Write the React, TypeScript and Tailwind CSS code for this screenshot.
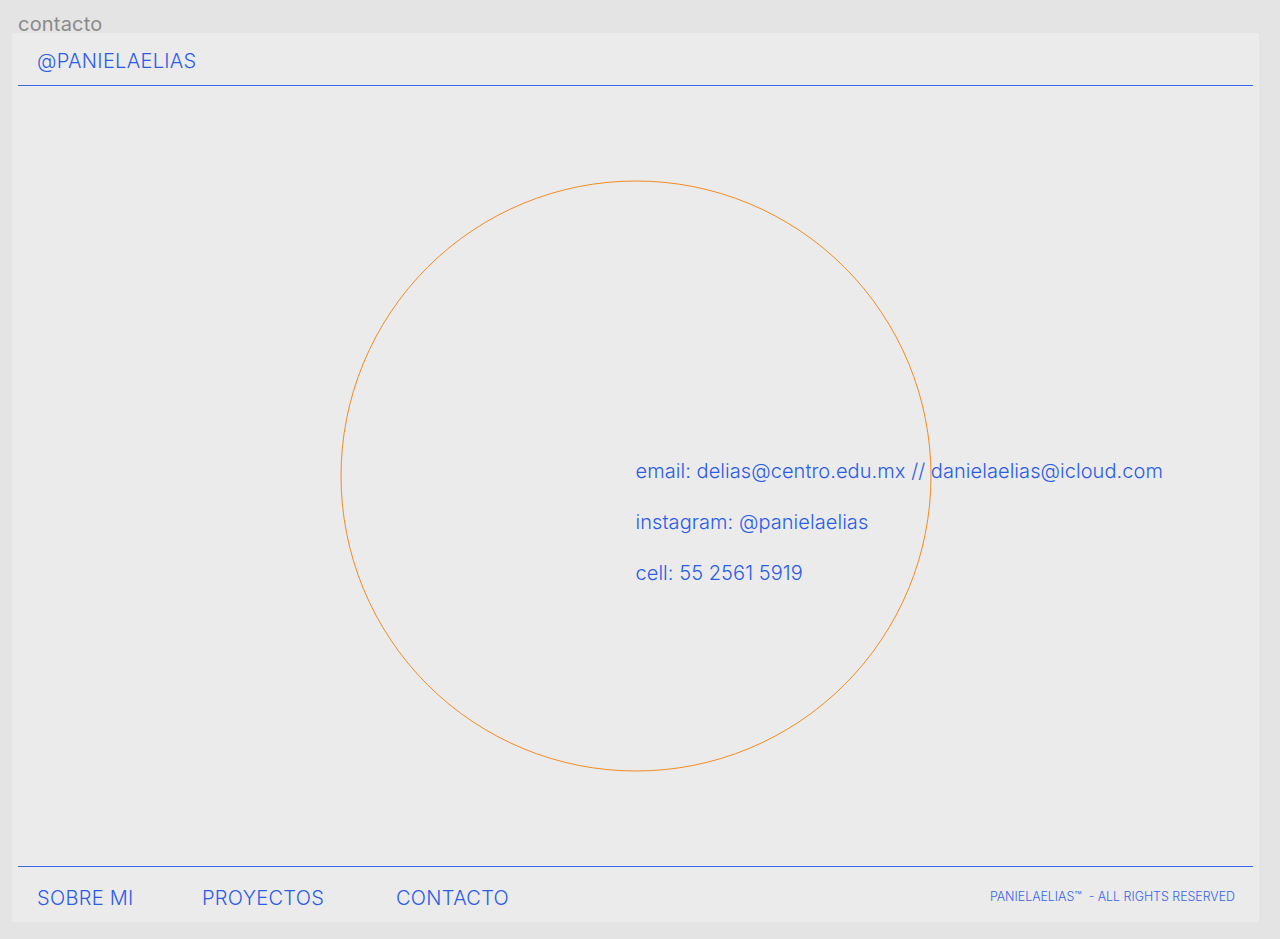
const font = { fontFamily: 'Inter, "Liberation Sans", sans-serif' };

const navItems = [
  { label: 'SOBRE MI', width: 'w-[165px]' },
  { label: 'PROYECTOS', width: 'w-[194px]' },
  { label: 'CONTACTO', width: 'w-auto' },
];

export default function App() {
  return (
    <div className="h-[939px] w-full bg-[#e4e4e4] pl-3 pr-[21px] flex flex-col" style={font}>
      <div className="h-[33px] pl-[6px] pt-[12px] text-[20px] leading-[24px] text-[#8a8a8a] tracking-[0.2px]">
        contacto
      </div>
      <div className="h-[889px] bg-[#ebebeb] px-[6px] flex flex-col text-[#2c5ce6]">
        <header className="h-[53px] border-b border-[#3a68ea] flex items-center pl-[19px] pt-[3px]">
          <span className="text-[20px] font-light tracking-[0.3px]">@PANIELAELIAS</span>
        </header>

        <main className="relative flex-1 flex items-start">
          <div className="absolute left-1/2 top-1/2 w-[591px] h-[591px] -translate-x-1/2 -translate-y-1/2 rounded-full border border-[#f28a22]" />
          <div className="w-1/2 shrink-0" />
          <div className="relative pt-[373px] flex flex-col gap-[27px] text-[20px] leading-[24px] font-light tracking-[0.06px]">
            <p>email: delias@centro.edu.mx // danielaelias@icloud.com</p>
            <p>instagram: @panielaelias</p>
            <p>cell: 55 2561 5919</p>
          </div>
        </main>

        <footer className="h-[56px] border-t border-[#3a68ea] flex items-center pl-[19px] pr-[18px] pt-[6px]">
          <nav className="flex text-[20px] font-light tracking-[0.3px]">
            {navItems.map((item) => (
              <span key={item.label} className={item.width}>
                {item.label}
              </span>
            ))}
          </nav>
          <span className="ml-auto text-[12.4px] font-light text-[#3864e8]">
            PANIELAELIAS™&nbsp; - ALL RIGHTS RESERVED
          </span>
        </footer>
      </div>
    </div>
  );
}
